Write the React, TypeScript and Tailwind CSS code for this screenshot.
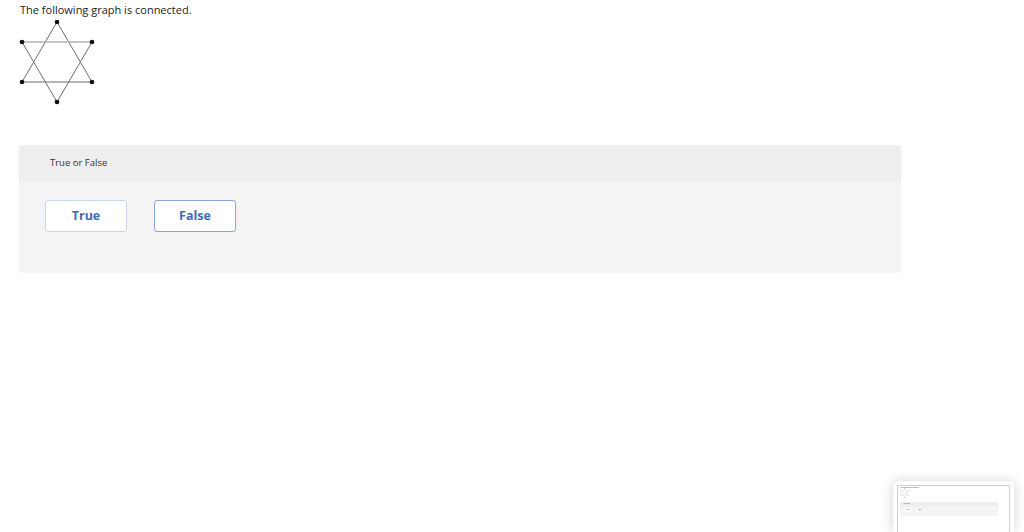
import React from "react";

const Graph = () => (
  <svg width="110" height="90" viewBox="0 17 110 90" className="block">
    <polygon points="57,22 22,82 92,82" fill="none" stroke="#6f6f6f" strokeWidth="1" />
    <line x1="22" y1="42" x2="57" y2="102" stroke="#6f6f6f" strokeWidth="1" />
    <line x1="92" y1="42" x2="57" y2="102" stroke="#6f6f6f" strokeWidth="1" />
    <line x1="22" y1="42" x2="92" y2="42" stroke="#b3b3b3" strokeWidth="1.4" />
    {[
      [57, 22],
      [22, 42],
      [92, 42],
      [22, 82],
      [92, 82],
      [57, 102],
    ].map(([x, y]) => (
      <circle key={`${x}-${y}`} cx={x} cy={y} r="2.3" fill="#111" />
    ))}
  </svg>
);

const Page = () => (
  <div className="w-[1024px] bg-white font-['Open_Sans','Liberation_Sans',sans-serif] text-[#222]">
    <p className="pl-[20px] pt-[2px] text-[11px] leading-[15px]">The following graph is connected.</p>
    <Graph />
    <div className="mx-[19px] mt-[38px] w-[882px] overflow-hidden rounded-[3px] bg-[#f4f4f4]">
      <div className="flex h-[37px] items-center bg-[#eeeeee] pl-[31px] text-[9.5px] text-[#333]">
        True or False
      </div>
      <div className="flex h-[91px] gap-[27px] pl-[26px] pt-[18px]">
        <button className="h-[32px] w-[82px] rounded-[3px] border border-[#c9d7ee] bg-white text-[12.5px] font-bold text-[#3d6cb4]">
          True
        </button>
        <button className="h-[32px] w-[82px] rounded-[3px] border border-[#8aa6d6] bg-white text-[12.5px] font-bold text-[#3d6cb4]">
          False
        </button>
      </div>
    </div>
  </div>
);

export default function App() {
  return (
    <div className="relative h-[532px] w-full overflow-hidden bg-white">
      <Page />
      <div className="absolute bottom-0 left-[893px] h-[51px] w-[121px] rounded-t-[5px] bg-white px-[4px] pt-[4px] shadow-[0_0_12px_rgba(0,0,0,0.18)]">
        <div className="h-full w-full overflow-hidden border-x border-t border-[#cfcfcf]">
          <div className="h-[60px] w-[1024px] origin-top-left scale-[0.111]">
            <Page />
          </div>
        </div>
      </div>
    </div>
  );
}
